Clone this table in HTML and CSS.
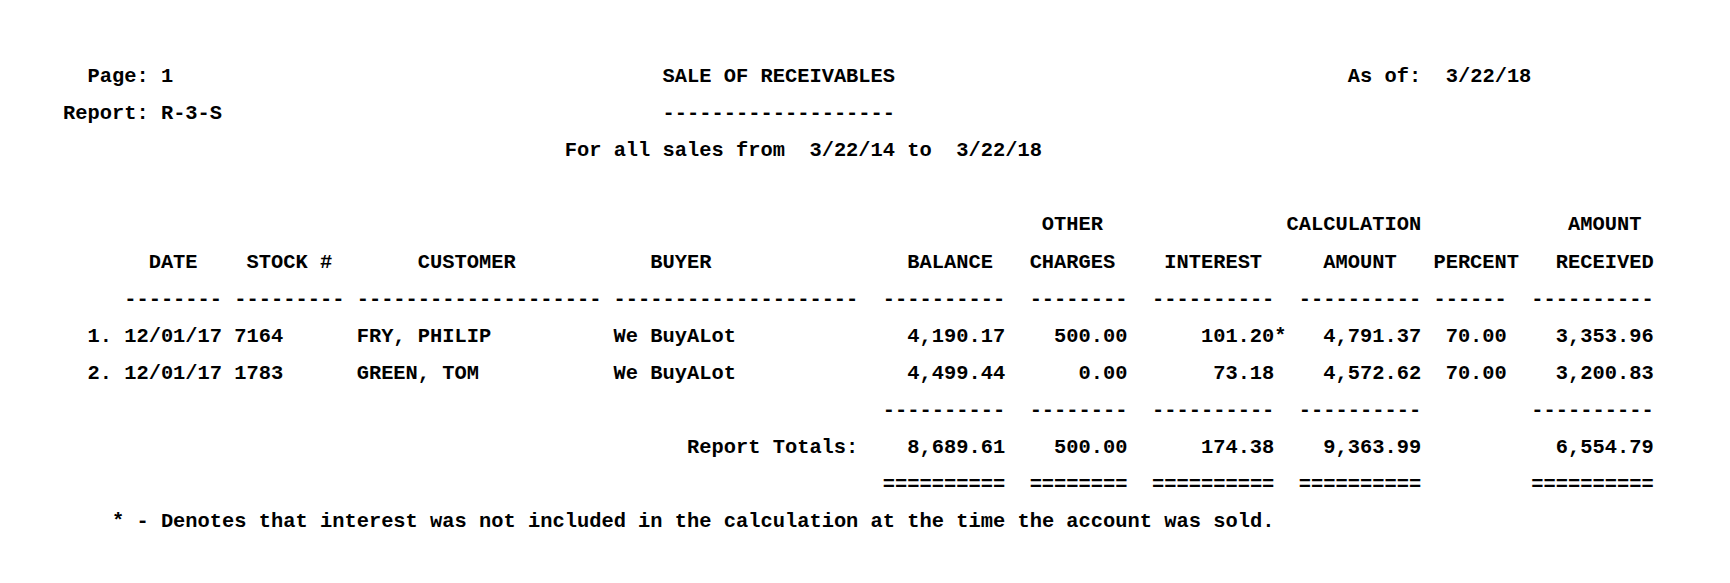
FILE: index.html
```html
<!DOCTYPE html>
<html lang="en">
<head>
<meta charset="utf-8">
<title>Sale of Receivables</title>
<link rel="stylesheet" href="styles.css">
</head>
<body>
<main class="report">
  <header class="report-head">
    <div class="head-line">
      <span class="h-left pad-2">Page: 1</span>
      <span class="h-mid">SALE OF RECEIVABLES</span>
      <span class="h-right">As of:  3/22/18</span>
    </div>
    <div class="head-line">
      <span class="h-left">Report: R-3-S</span>
      <span class="h-mid">-------------------</span>
      <span class="h-right"></span>
    </div>
    <div class="head-line">
      <span class="h-range">For all sales from  3/22/14 to  3/22/18</span>
    </div>
  </header>

  <section class="grid">
    <!-- header row 1 -->
    <span class="c c-num"></span>
    <span class="c c-date"></span>
    <span class="c c-stock"></span>
    <span class="c c-cust"></span>
    <span class="c c-buyer"></span>
    <span class="c c-bal"></span>
    <span class="c c-oth pl-1">OTHER</span>
    <span class="c c-int-calc pl-11">CALCULATION</span>
    <span class="c c-pct"></span>
    <span class="c c-rec pl-3">AMOUNT</span>

    <!-- header row 2 -->
    <span class="c c-num"></span>
    <span class="c c-date pl-2">DATE</span>
    <span class="c c-stock pl-1">STOCK #</span>
    <span class="c c-cust pl-5">CUSTOMER</span>
    <span class="c c-buyer pl-3">BUYER</span>
    <span class="c c-bal pl-2">BALANCE</span>
    <span class="c c-oth">CHARGES</span>
    <span class="c c-int pl-1">INTEREST</span>
    <span class="c c-calc pl-2">AMOUNT</span>
    <span class="c c-pct">PERCENT</span>
    <span class="c c-rec pl-2">RECEIVED</span>

    <!-- rule row -->
    <span class="c c-num"></span>
    <span class="c c-date">--------</span>
    <span class="c c-stock">---------</span>
    <span class="c c-cust">--------------------</span>
    <span class="c c-buyer">--------------------</span>
    <span class="c c-bal">----------</span>
    <span class="c c-oth">--------</span>
    <span class="c c-int">----------</span>
    <span class="c c-calc">----------</span>
    <span class="c c-pct">------</span>
    <span class="c c-rec">----------</span>

    <!-- data 1 -->
    <span class="c c-num">1.</span>
    <span class="c c-date">12/01/17</span>
    <span class="c c-stock">7164</span>
    <span class="c c-cust">FRY, PHILIP</span>
    <span class="c c-buyer">We BuyALot</span>
    <span class="c c-bal r">4,190.17</span>
    <span class="c c-oth r">500.00</span>
    <span class="c c-int r">101.20<span class="flag">*</span></span>
    <span class="c c-calc r">4,791.37</span>
    <span class="c c-pct r">70.00</span>
    <span class="c c-rec r">3,353.96</span>

    <!-- data 2 -->
    <span class="c c-num">2.</span>
    <span class="c c-date">12/01/17</span>
    <span class="c c-stock">1783</span>
    <span class="c c-cust">GREEN, TOM</span>
    <span class="c c-buyer">We BuyALot</span>
    <span class="c c-bal r">4,499.44</span>
    <span class="c c-oth r">0.00</span>
    <span class="c c-int r">73.18</span>
    <span class="c c-calc r">4,572.62</span>
    <span class="c c-pct r">70.00</span>
    <span class="c c-rec r">3,200.83</span>

    <!-- sub rule -->
    <span class="c c-lead"></span>
    <span class="c c-bal">----------</span>
    <span class="c c-oth">--------</span>
    <span class="c c-int">----------</span>
    <span class="c c-calc">----------</span>
    <span class="c c-pct"></span>
    <span class="c c-rec">----------</span>

    <!-- totals -->
    <span class="c c-lead r">Report Totals:</span>
    <span class="c c-bal r">8,689.61</span>
    <span class="c c-oth r">500.00</span>
    <span class="c c-int r">174.38</span>
    <span class="c c-calc r">9,363.99</span>
    <span class="c c-pct"></span>
    <span class="c c-rec r">6,554.79</span>

    <!-- double rule -->
    <span class="c c-lead"></span>
    <span class="c c-bal">==========</span>
    <span class="c c-oth">========</span>
    <span class="c c-int">==========</span>
    <span class="c c-calc">==========</span>
    <span class="c c-pct"></span>
    <span class="c c-rec">==========</span>
  </section>

  <p class="footnote">* - Denotes that interest was not included in the calculation at the time the account was sold.</p>
</main>
</body>
</html>
```

FILE: styles.css
```css
html, body {
  margin: 0;
  padding: 0;
  background: #ffffff;
}

body {
  font-family: "Liberation Mono", "Courier New", monospace;
  font-weight: 700;
  font-size: 20.4px;
  line-height: 37.12px;
  color: #000000;
}

.report {
  padding: 58px 0 0 63px;
}

.head-line {
  display: grid;
  grid-template-columns: 49ch 56ch 1fr;
  height: 37.12px;
  white-space: pre;
}

.h-range {
  grid-column: 1 / -1;
  padding-left: 41ch;
}

.pad-2 { padding-left: 2ch; }

.grid {
  display: grid;
  margin-top: 37.12px;
  grid-template-columns:
    [num] 5ch
    [date] 9ch
    [stock] 10ch
    [cust] 21ch
    [buyer] 22ch
    [bal] 12ch
    [oth] 10ch
    [int] 12ch
    [calc] 11ch
    [pct] 8ch
    [rec] 10ch;
  grid-auto-rows: 37.12px;
}

.c {
  white-space: pre;
  overflow: visible;
}

.c-num { grid-column: num / span 1; padding-left: 2ch; }
.c-date { grid-column: date / span 1; }
.c-stock { grid-column: stock / span 1; }
.c-cust { grid-column: cust / span 1; }
.c-buyer { grid-column: buyer / span 1; }
.c-lead { grid-column: num / bal; padding-right: 2ch; }
.c-bal { grid-column: bal / span 1; padding-right: 2ch; }
.c-oth { grid-column: oth / span 1; padding-right: 2ch; }
.c-int { grid-column: int / span 1; padding-right: 2ch; }
.c-int-calc { grid-column: int / pct; }
.c-calc { grid-column: calc / span 1; padding-right: 1ch; }
.c-pct { grid-column: pct / span 1; padding-right: 2ch; }
.c-rec { grid-column: rec / span 1; }

.r { text-align: right; }

.flag { margin-right: -1ch; }

.pl-1 { padding-left: 1ch; }
.pl-2 { padding-left: 2ch; }
.pl-3 { padding-left: 3ch; }
.pl-5 { padding-left: 5ch; }
.pl-11 { padding-left: 11ch; }

.footnote {
  margin: 0;
  padding-left: 4ch;
  white-space: pre;
}
```
